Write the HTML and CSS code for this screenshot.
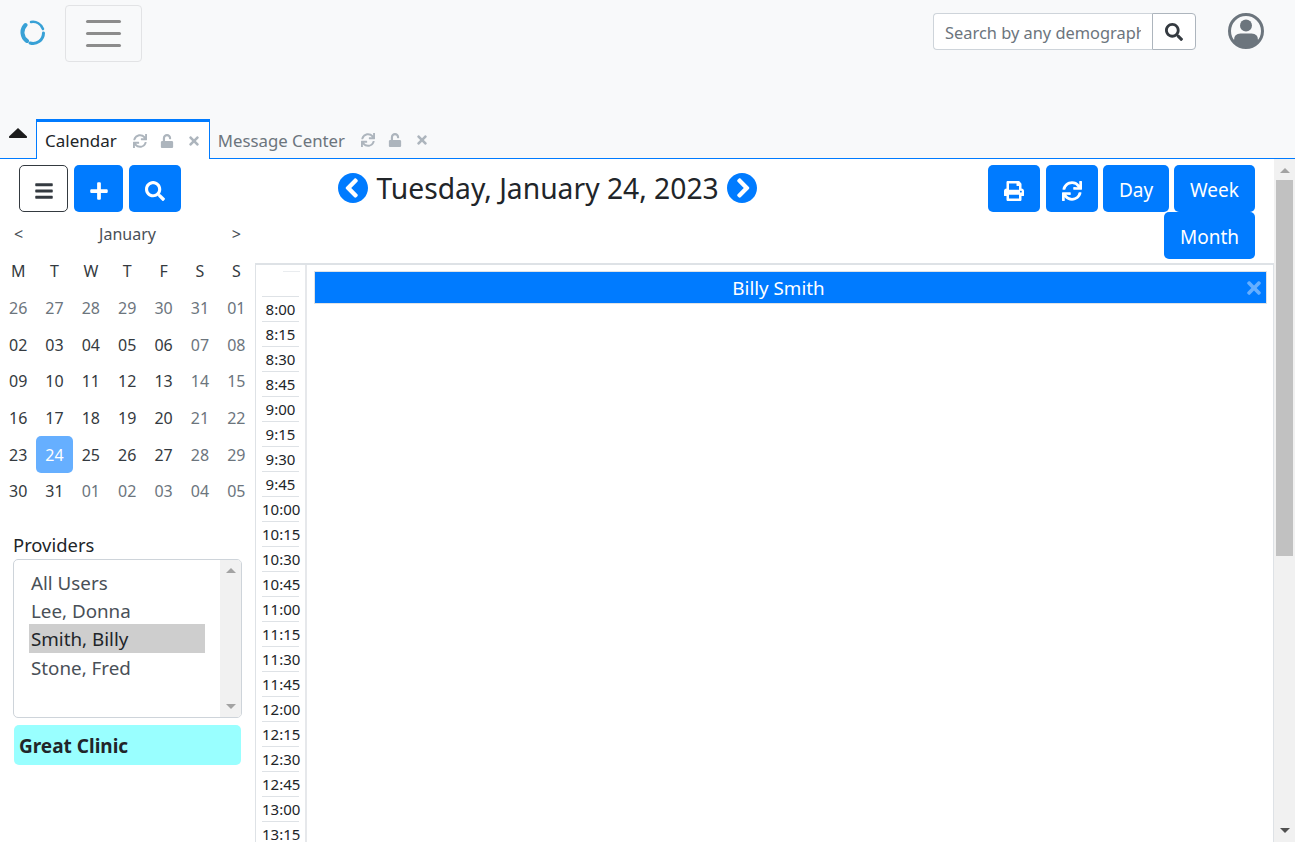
FILE: index.html
```html
<!DOCTYPE html>
<html lang="en">
<head>
    <meta charset="UTF-8">
    <title>Calendar</title>
    <link rel="stylesheet" href="styles.css">
</head>
<body>
    <svg class="defs" width="0" height="0">
        <symbol id="i-search" viewBox="0 0 512 512"><path d="M505 442.7L405.3 343c-4.5-4.5-10.6-7-17-7H372c27.6-35.3 44-79.7 44-128C416 93.1 322.9 0 208 0S0 93.1 0 208s93.1 208 208 208c48.3 0 92.7-16.4 128-44v16.3c0 6.4 2.5 12.5 7 17l99.7 99.7c9.4 9.4 24.6 9.4 33.9 0l28.3-28.3c9.4-9.4 9.4-24.6.1-34zM208 336c-70.7 0-128-57.2-128-128 0-70.7 57.2-128 128-128 70.7 0 128 57.2 128 128 0 70.7-57.2 128-128 128z"/></symbol>
        <symbol id="i-sync" viewBox="0 0 512 512"><path d="M440.65 12.57l4 82.77A247.16 247.16 0 0 0 255.83 8C134.73 8 33.91 94.92 12.29 209.82A12 12 0 0 0 24.09 224h49.05a12 12 0 0 0 11.67-9.26 175.91 175.91 0 0 1 317-56.94l-101.46-4.86a12 12 0 0 0-12.57 12v47.41a12 12 0 0 0 12 12H500a12 12 0 0 0 12-12V12a12 12 0 0 0-12-12h-47.37a12 12 0 0 0-11.98 12.57zM255.83 432a175.61 175.61 0 0 1-146-77.8l101.8 4.87a12 12 0 0 0 12.57-12v-47.4a12 12 0 0 0-12-12H12a12 12 0 0 0-12 12V500a12 12 0 0 0 12 12h47.35a12 12 0 0 0 12-12.6l-4.15-82.57A247.17 247.17 0 0 0 255.83 504c121.11 0 221.93-86.92 243.55-201.82a12 12 0 0 0-11.8-14.18h-49.05a12 12 0 0 0-11.67 9.26A175.86 175.86 0 0 1 255.83 432z"/></symbol>
        <symbol id="i-unlock" viewBox="0 0 448 512"><path d="M400 256H152V152.9c0-39.6 31.7-72.5 71.3-72.9 40-.4 72.7 32.1 72.7 72v16c0 13.3 10.7 24 24 24h32c13.3 0 24-10.7 24-24v-16C376 68 307.5-.3 223.5 0 139.5.3 72 69.5 72 153.5V256H48c-26.5 0-48 21.5-48 48v160c0 26.5 21.5 48 48 48h352c26.5 0 48-21.5 48-48V304c0-26.5-21.5-48-48-48z"/></symbol>
        <symbol id="i-times" viewBox="0 0 352 512"><path d="M242.72 256l100.07-100.07c12.28-12.28 12.28-32.19 0-44.48l-22.24-22.24c-12.28-12.28-32.19-12.28-44.48 0L176 189.28 75.93 89.21c-12.28-12.28-32.19-12.28-44.48 0L9.21 111.45c-12.28 12.28-12.28 32.19 0 44.48L109.28 256 9.21 356.07c-12.28 12.28-12.28 32.19 0 44.48l22.24 22.24c12.28 12.28 32.2 12.28 44.48 0L176 322.72l100.07 100.07c12.28 12.28 32.2 12.28 44.48 0l22.24-22.24c12.28-12.28 12.28-32.19 0-44.48L242.72 256z"/></symbol>
    </svg>

    <nav class="navbar">
        <svg class="logo" viewBox="0 0 28 28">
            <path class="arc-thick" d="M5.5 6 A10.5 10.5 0 0 0 7 22"/>
            <path class="arc-thin" d="M11 3 A10.5 10.5 0 0 1 23 10"/>
            <path class="arc-mid" d="M23.5 14 A10.5 10.5 0 0 1 10 24"/>
        </svg>
        <button class="toggler"><span></span><span></span><span></span></button>
        <form class="search">
            <input class="search-input" type="text" placeholder="Search by any demographics">
            <button class="search-btn" type="button"><svg class="ico"><use href="#i-search"/></svg></button>
        </form>
        <svg class="user" viewBox="0 0 36 36">
            <defs><clipPath id="ring"><circle cx="18" cy="18" r="15.5"/></clipPath></defs>
            <circle cx="18" cy="18" r="16.5" class="user-ring"/>
            <circle cx="18" cy="12.5" r="6" class="user-fill"/>
            <path d="M6 34 V27 Q6 20.5 12.5 20.5 H23.5 Q30 20.5 30 27 V34 Z" class="user-fill" clip-path="url(#ring)"/>
        </svg>
    </nav>

    <div class="tabs">
        <svg class="collapse" viewBox="0 0 20 12"><path d="M10 1 L19 9.5 Q19.5 11 18 11 H2 Q.5 11 1 9.5 Z"/></svg>
        <div class="tab active">
            <span class="tab-title">Calendar</span>
            <svg class="tab-ico"><use href="#i-sync"/></svg>
            <svg class="tab-ico"><use href="#i-unlock"/></svg>
            <svg class="tab-ico tab-x"><use href="#i-times"/></svg>
        </div>
        <div class="tab">
            <span class="tab-title">Message Center</span>
            <svg class="tab-ico"><use href="#i-sync"/></svg>
            <svg class="tab-ico"><use href="#i-unlock"/></svg>
            <svg class="tab-ico tab-x"><use href="#i-times"/></svg>
        </div>
    </div>

    <div class="content">
        <aside class="sidebar">
            <div class="side-buttons">
                <button class="btn btn-outline">
                    <svg class="ico" viewBox="0 0 448 512"><path d="M16 132h416c8.837 0 16-7.163 16-16V76c0-8.837-7.163-16-16-16H16C7.163 60 0 67.163 0 76v40c0 8.837 7.163 16 16 16zm0 160h416c8.837 0 16-7.163 16-16v-40c0-8.837-7.163-16-16-16H16c-8.837 0-16 7.163-16 16v40c0 8.837 7.163 16 16 16zm0 160h416c8.837 0 16-7.163 16-16v-40c0-8.837-7.163-16-16-16H16c-8.837 0-16 7.163-16 16v40c0 8.837 7.163 16 16 16z"/></svg>
                </button>
                <button class="btn btn-plus">
                    <svg class="ico" viewBox="0 0 448 512"><path d="M416 208H272V64c0-17.67-14.33-32-32-32h-32c-17.67 0-32 14.33-32 32v144H32c-17.67 0-32 14.33-32 32v32c0 17.67 14.33 32 32 32h144v144c0 17.67 14.33 32 32 32h32c17.67 0 32-14.33 32-32V304h144c17.67 0 32-14.33 32-32v-32c0-17.67-14.33-32-32-32z"/></svg>
                </button>
                <button class="btn btn-find"><svg class="ico"><use href="#i-search"/></svg></button>
            </div>

            <div class="month-head"><span>&lt;</span><span>January</span><span>&gt;</span></div>
            <div class="month-grid" id="month"></div>

            <div class="providers-label">Providers</div>
            <div class="listbox">
                <ul class="options">
                    <li>All Users</li>
                    <li>Lee, Donna</li>
                    <li class="selected">Smith, Billy</li>
                    <li>Stone, Fred</li>
                </ul>
                <div class="list-scroll"><i class="arrow-up"></i><i class="arrow-down"></i></div>
            </div>
            <div class="clinic">Great Clinic</div>
        </aside>

        <main class="main">
            <div class="toolbar">
                <div class="date-nav">
                    <svg class="circle-ico" viewBox="8 8 496 496"><path d="M256 504C119 504 8 393 8 256S119 8 256 8s248 111 248 248-111 248-248 248zM142.1 273l135.5 135.5c9.4 9.4 24.6 9.4 33.9 0l17-17c9.4-9.4 9.4-24.6 0-33.9L226.9 256l101.6-101.6c9.4-9.4 9.4-24.6 0-33.9l-17-17c-9.4-9.4-24.6-9.4-33.9 0L142.1 239c-9.4 9.4-9.4 24.6 0 34z"/></svg>
                    <span class="date-title">Tuesday, January 24, 2023</span>
                    <svg class="circle-ico" viewBox="8 8 496 496"><path d="M256 8c137 0 248 111 248 248S393 504 256 504 8 393 8 256 119 8 256 8zm113.9 231L234.4 103.5c-9.4-9.4-24.6-9.4-33.9 0l-17 17c-9.4 9.4-9.4 24.6 0 33.9L285.1 256 183.5 357.6c-9.4 9.4-9.4 24.6 0 33.9l17 17c9.4 9.4 24.6 9.4 33.9 0L369.9 273c9.4-9.4 9.4-24.6 0-34z"/></svg>
                </div>
                <div class="views">
                    <button class="btn btn-print">
                        <svg class="ico" viewBox="0 0 512 512"><path d="M448 192V77.25c0-8.49-3.37-16.62-9.37-22.63L393.37 9.37c-6-6-14.14-9.37-22.63-9.37H96C78.33 0 64 14.33 64 32v160c-35.35 0-64 28.65-64 64v112c0 8.84 7.16 16 16 16h48v96c0 17.67 14.33 32 32 32h320c17.67 0 32-14.33 32-32v-96h48c8.84 0 16-7.16 16-16V256c0-35.35-28.65-64-64-64zm-64 256H128v-96h256v96zm0-224H128V64h192v48c0 8.84 7.16 16 16 16h48v96zm48 72c-13.25 0-24-10.75-24-24 0-13.26 10.75-24 24-24s24 10.74 24 24c0 13.25-10.75 24-24 24z"/></svg>
                    </button>
                    <button class="btn btn-sync"><svg class="ico"><use href="#i-sync"/></svg></button>
                    <button class="btn btn-day">Day</button>
                    <button class="btn btn-week">Week</button>
                    <button class="btn btn-month">Month</button>
                </div>
            </div>

            <div class="calendar">
                <div class="times" id="times">
                    <div class="times-head"><span></span></div>
                </div>
                <div class="day-col">
                    <div class="provider-bar">
                        <span>Billy Smith</span>
                        <svg class="bar-x"><use href="#i-times"/></svg>
                    </div>
                </div>
            </div>
        </main>

        <div class="scrollbar">
            <i class="arrow-up"></i>
            <div class="thumb"></div>
            <i class="arrow-down"></i>
        </div>
    </div>

    <script>
    // Build the month grid
    const month = document.getElementById("month");
    const heads = ["M", "T", "W", "T", "F", "S", "S"];
    const days = ["26","27","28","29","30","31","01","02","03","04","05","06","07","08","09","10","11","12","13","14","15","16","17","18","19","20","21","22","23","24","25","26","27","28","29","30","31","01","02","03","04","05"];
    heads.forEach(function(h) {
        let d = document.createElement("div");
        d.className = "cell head";
        d.textContent = h;
        month.appendChild(d);
    });
    days.forEach(function(day, i) {
        let d = document.createElement("div");
        d.className = "cell";
        // first row and trailing days belong to other months, weekends are muted too
        if (i < 7 || i > 36 || i % 7 > 4) d.className += " muted";
        if (i === 29) d.className = "cell today";
        d.textContent = day;
        month.appendChild(d);
    });

    // Build the time column
    const times = document.getElementById("times");
    for (let m = 8 * 60; m <= 13 * 60 + 15; m += 15) {
        let d = document.createElement("div");
        d.className = "time";
        let min = m % 60;
        d.textContent = Math.floor(m / 60) + ":" + (min < 10 ? "0" + min : min);
        times.appendChild(d);
    }
    </script>
</body>
</html>
```

FILE: styles.css
```css
* {
    box-sizing: border-box;
}

html, body {
    height: 842px;
    overflow: hidden;
}

body {
    margin: 0;
    background: #fff;
    color: #212529;
    font-family: "Noto Sans", "Liberation Sans", sans-serif;
    font-size: 16px;
}

.defs {
    display: block;
    height: 0;
}

/* top navbar */
.navbar {
    display: flex;
    align-items: flex-start;
    height: 119px;
    background: #f8f9fa;
}

.logo {
    width: 28px;
    height: 28px;
    margin: 19px 0 0 20px;
    fill: none;
    stroke: #38a1d6;
    stroke-linecap: round;
}

.arc-thick {
    stroke-width: 4;
}

.arc-thin {
    stroke-width: 2.5;
}

.arc-mid {
    stroke-width: 3;
}

.toggler {
    display: flex;
    flex-direction: column;
    justify-content: center;
    gap: 9px;
    width: 77px;
    height: 57px;
    margin: 5px 0 0 17px;
    padding: 0 20px;
    background: transparent;
    border: 1px solid #e2e3e5;
    border-radius: 4px;
}

.toggler span {
    display: block;
    height: 3px;
    border-radius: 2px;
    background: #8c8c8c;
}

.search {
    display: flex;
    height: 37px;
    margin: 13px 0 0 791px;
}

.search-input {
    width: 219px;
    padding: 2px 11px 0;
    border: 1px solid #ced4da;
    border-right: 0;
    border-radius: 4px 0 0 4px;
    font-family: inherit;
    font-size: 16.4px;
    background: #fff;
}

.search-input::placeholder {
    color: #6c757d;
}

.search-btn {
    display: flex;
    align-items: center;
    justify-content: center;
    width: 44px;
    padding: 0;
    background: #fff;
    border: 1px solid #adb5bd;
    border-radius: 0 4px 4px 0;
    fill: #343a40;
}

.ico {
    width: 18px;
    height: 18px;
}

.user {
    width: 36px;
    height: 36px;
    margin: 13px 0 0 32px;
}

.user-ring {
    fill: none;
    stroke: #6c757d;
    stroke-width: 3;
}

.user-fill {
    fill: #6c757d;
}

/* tabs */
.tabs {
    display: flex;
    align-items: flex-end;
    height: 40px;
    background: #f8f9fa;
    border-bottom: 1px solid #007bff;
}

.collapse {
    width: 20px;
    height: 12px;
    margin: 0 8px 19px 8px;
}

.collapse path {
    fill: #1c1c1c;
}

.tab {
    display: flex;
    align-items: center;
    height: 39px;
    padding: 3px 8px 0 8px;
    font-size: 16.8px;
    color: #6c757d;
}

.tab.active {
    height: 40px;
    margin-bottom: -1px;
    padding: 0 8px 0 8px;
    background: #fff;
    color: #212529;
    font-size: 17px;
    border: 1px solid #007bff;
    border-top-width: 3px;
    border-bottom: 0;
}

.tab-title {
    margin-right: 16px;
}

.tab-ico {
    width: 14px;
    height: 14px;
    margin-right: 13px;
    fill: #adb5bd;
}

.tab-ico.tab-x {
    margin-right: 0;
}

/* page */
.content {
    display: flex;
    height: 683px;
}

.sidebar {
    flex: none;
    width: 255px;
    padding-top: 6px;
}

.side-buttons {
    display: flex;
    gap: 6px;
    padding-left: 19px;
}

.btn {
    height: 47px;
    padding: 2px 0 0;
    background: #007bff;
    color: #fff;
    fill: #fff;
    border: 0;
    border-radius: 5px;
    font-family: inherit;
    font-size: 19px;
}

.btn .ico {
    display: block;
    width: 20px;
    height: 20px;
    margin: 2px auto 0;
}

.btn-outline {
    width: 49px;
    background: #fff;
    border: 1px solid #343a40;
    fill: #343a40;
}

.btn-plus {
    width: 49px;
}

.btn-find {
    width: 52px;
}

.month-head {
    display: flex;
    justify-content: space-between;
    height: 33px;
    margin-top: 8px;
    padding: 0 14px;
    font-size: 16px;
    line-height: 29px;
    color: #495057;
}

.month-grid {
    display: grid;
    grid-template-columns: repeat(7, 1fr);
    grid-auto-rows: 36.7px;
    padding-right: 0.5px;
}

.cell {
    display: flex;
    align-items: center;
    justify-content: center;
    border-radius: 5px;
    color: #343a40;
}

.head {
    color: #343a40;
}

.muted {
    color: #6c757d;
}

.today {
    background: #66afff;
    color: #fff;
}

.providers-label {
    height: 28px;
    margin: 21.4px 0 0 13px;
    font-size: 18.4px;
    line-height: 28px;
}

.listbox {
    display: flex;
    width: 229px;
    height: 159px;
    margin: 0 0 0 13px;
    overflow: hidden;
    border: 1px solid #ced4da;
    border-radius: 5px;
    background: #fff;
    font-size: 18.8px;
}

.options {
    flex: 1;
    margin: 0;
    padding: 7.4px 15px;
    list-style: none;
    color: #495057;
}

.options li {
    height: 28.4px;
    padding-left: 2px;
    line-height: 30px;
}

.options .selected {
    height: 29px;
    background: #cecece;
    color: #212529;
}

.list-scroll {
    display: flex;
    flex-direction: column;
    justify-content: space-between;
    align-items: center;
    flex: none;
    width: 21px;
    padding: 8px 0;
    background: #f1f1f1;
}

.arrow-up,
.arrow-down {
    display: block;
    flex: none;
    width: 0;
    height: 0;
    border-left: 5px solid transparent;
    border-right: 5px solid transparent;
}

.arrow-up {
    border-bottom: 5px solid #a3a3a3;
}

.arrow-down {
    border-top: 5px solid #505050;
}

.list-scroll .arrow-down {
    border-top-color: #a3a3a3;
}

.clinic {
    width: 227px;
    height: 40px;
    margin: 7px 0 0 14px;
    padding-left: 5px;
    background: #99ffff;
    border-radius: 5px;
    font-size: 19px;
    font-weight: 700;
    line-height: 42px;
}

/* main column */
.main {
    flex: 1;
    min-width: 0;
    padding-top: 6px;
}

.toolbar {
    display: flex;
    justify-content: space-between;
    padding-right: 19px;
}

.date-nav {
    display: flex;
    align-items: flex-start;
    gap: 8.5px;
    padding: 0 0 0 83px;
}

.circle-ico {
    width: 30px;
    height: 30px;
    margin-top: 8px;
    fill: #007bff;
}

.date-title {
    font-size: 28.25px;
    line-height: 47px;
}

.views {
    display: flex;
    flex-wrap: wrap;
    justify-content: flex-end;
    width: 267px;
}

.btn-print {
    width: 52px;
}

.btn-sync {
    width: 52px;
    margin-left: 6px;
}

.btn-day {
    width: 66px;
    margin-left: 5px;
}

.btn-week {
    width: 81px;
    margin-left: 5px;
}

.btn-month {
    width: 91px;
}

.calendar {
    display: flex;
    height: 579px;
    margin-top: 4px;
    overflow: hidden;
    border-top: 2px solid #dee2e6;
    border-left: 1px solid #dee2e6;
    border-right: 1px solid #dee2e6;
}

.times {
    flex: none;
    width: 51px;
    padding: 0 6px;
    border-right: 2px solid #e6e8eb;
}

.times-head {
    display: flow-root;
    height: 32px;
    border-bottom: 1px solid #dee2e6;
}

.times-head span {
    display: block;
    width: 17px;
    margin: 6px 0 0 21px;
    border-top: 1px solid #e9ecef;
}

.time {
    height: 25px;
    border-bottom: 1px solid #dee2e6;
    font-size: 15px;
    line-height: 25px;
    text-align: center;
}

.day-col {
    flex: 1;
    padding: 6px 6px 0 7px;
}

.provider-bar {
    display: flex;
    align-items: center;
    justify-content: center;
    position: relative;
    height: 33px;
    padding-right: 24px;
    background: #007bff;
    border: 1px solid #dee2e6;
    color: #fff;
    font-size: 18.8px;
}

.bar-x {
    position: absolute;
    right: 2px;
    top: 0;
    bottom: 0;
    width: 20px;
    height: 20px;
    margin: auto 0;
    fill: #66afff;
}

/* page scrollbar */
.scrollbar {
    display: flex;
    flex-direction: column;
    align-items: center;
    flex: none;
    width: 21px;
    padding: 9px 2px 9px 2px;
    background: #f1f1f1;
}

.thumb {
    flex: none;
    width: 100%;
    height: 376px;
    margin-top: 7px;
    margin-bottom: auto;
    background: #c1c1c1;
}
```
